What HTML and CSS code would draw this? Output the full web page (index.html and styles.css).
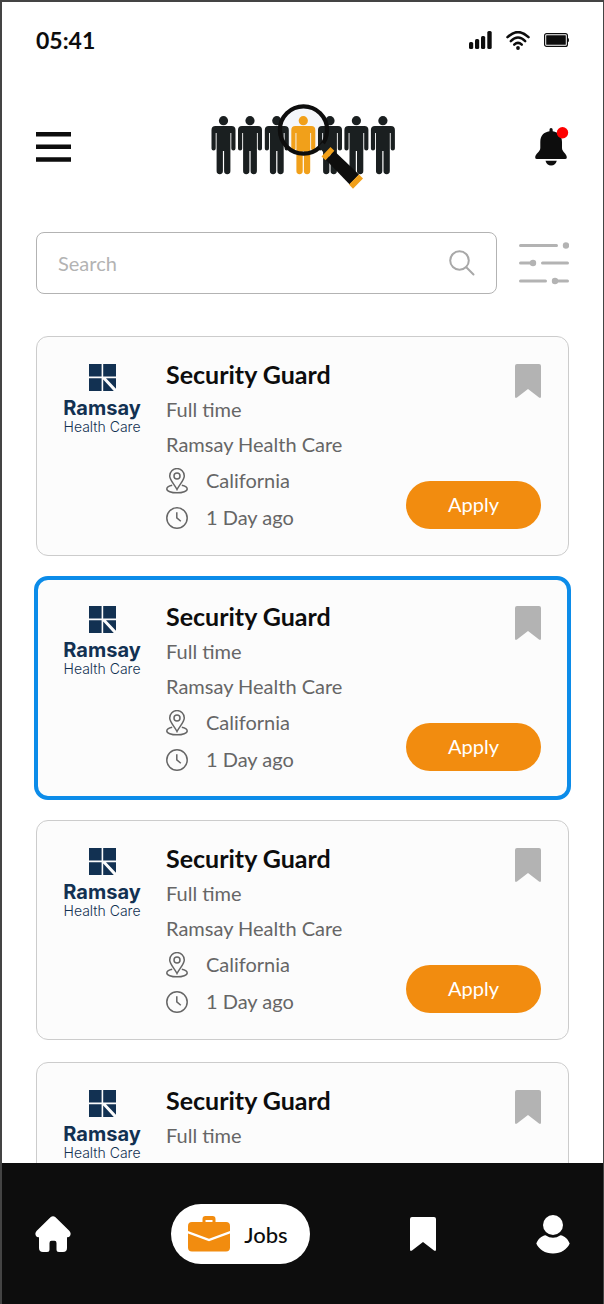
FILE: index.html
```html
<!DOCTYPE html>
<html lang="en">
<head>
  <meta charset="UTF-8">
  <meta name="viewport" content="width=device-width, initial-scale=1">
  <title>Jobs</title>
  <link rel="stylesheet" href="styles.css">
</head>
<body>
  <!-- shared icons -->
  <svg class="sprite" aria-hidden="true">
    <symbol id="person" viewBox="-13 0 26 72" overflow="visible">
      <circle cx="0" cy="16.7" r="4.6"/>
      <path d="M-8 22H8Q12 22 12 26V44.5a2 2 0 0 1-4.2 0V29H6.9V67a2.6 2.6 0 0 1-6.3 0V47H-.6V67a2.6 2.6 0 0 1-6.3 0V29H-7.8V44.5a2 2 0 0 1-4.2 0V26Q-12 22-8 22Z"/>
    </symbol>
    <symbol id="bookmark" viewBox="0 0 26 34">
      <path d="M2 0H24Q26 0 26 2V32.5Q26 34.600 24 33.600L13 25 2 33.600Q0 34.600 0 32.500V2Q0 0 2 0Z"/>
    </symbol>
    <symbol id="ramsay" viewBox="0 0 27 27">
      <path d="M0 0H12.600V12.600H0ZM14.200 0H27V12.600H14.200ZM0 14.200H12.600V27H0ZM17 14.200H27V24.700ZM14.200 15.500L24.800 27H14.200Z"/>
    </symbol>
    <symbol id="pin" viewBox="0 0 22 26">
      <path d="M11 21.500C8.500 16.500 3.700 11.800 3.700 7.900a7.300 7.300 0 0 1 14.600 0C18.300 11.800 13.500 16.500 11 21.500Z"/>
      <circle cx="11" cy="8" r="3"/>
      <path d="M6.200 17.300C2.800 18 .8 19.300.8 20.900c0 2.200 4.500 3.900 10.200 3.900s10.200-1.700 10.200-3.900c0-1.600-2-2.900-5.400-3.600"/>
    </symbol>
    <symbol id="clock" viewBox="0 0 22 22">
      <circle cx="11" cy="11" r="10.200"/>
      <path d="M10.800 5.300V10.800L14.800 14.200"/>
    </symbol>
  </svg>

  <div class="screen">
    <div class="status">
      <span class="time">05:41</span>
      <div class="status-icons">
        <svg width="23" height="18" viewBox="0 0 23 18" aria-hidden="true">
          <rect x="0" y="11" width="4.200" height="7" rx="1.500"/>
          <rect x="6" y="8" width="4.200" height="10" rx="1.500"/>
          <rect x="12" y="5" width="4.200" height="13" rx="1.500"/>
          <rect x="18.300" y="0" width="4.400" height="18" rx="1.500"/>
        </svg>
        <svg width="24" height="19" viewBox="0 0 24 19" aria-hidden="true">
          <g fill="none" stroke="#0d0d0d" stroke-width="2.500" stroke-linecap="round">
            <path d="M1.500 6.200Q12-4 22.500 6.200"/>
            <path d="M4.800 10.100Q12 2.900 19.200 10.100"/>
            <path d="M8.200 13.700Q12 9.900 15.800 13.700"/>
          </g>
          <circle cx="12" cy="17" r="1.900"/>
        </svg>
        <svg width="25" height="14" viewBox="0 0 25 14" aria-hidden="true">
          <rect x=".6" y=".6" width="22.800" height="12.800" rx="2" fill="none" stroke="#0d0d0d" stroke-width="1.200"/>
          <rect x="2.200" y="2.200" width="19.600" height="9.600" rx=".5"/>
          <path d="M23.500 4.500Q25 5 25 7T23.500 9.500Z"/>
        </svg>
      </div>
    </div>

    <header class="topbar">
      <button class="icon-btn" type="button" aria-label="Menu">
        <svg width="35" height="30" viewBox="0 0 35 30"><path d="M0 0H35V4.500H0ZM0 12.600H35V17.100H0ZM0 25.300H35V29.800H0Z"/></svg>
      </button>
      <svg class="logo" width="184" height="85" viewBox="0 0 184 85" aria-hidden="true">
        <circle cx="92.500" cy="26" r="23" fill="#f4f6fa"/>
        <g fill="#1a1f20">
          <use href="#person" x="-.5" width="26" height="72"/>
          <use href="#person" x="26" width="26" height="72"/>
          <use href="#person" x="52.800" width="26" height="72"/>
          <use href="#person" x="106" width="26" height="72"/>
          <use href="#person" x="132.400" width="26" height="72"/>
          <use href="#person" x="158.900" width="26" height="72"/>
        </g>
        <use href="#person" x="79.300" width="26" height="72" fill="#f1a01a"/>
        <circle cx="92.500" cy="26" r="23.600" fill="none" stroke="#0d0d0d" stroke-width="4.200"/>
        <path d="M107.500 42.500L111.500 38.500 121 46 115 51.500Z" fill="#1a1f20"/>
        <path d="M115 56L123.300 47 148 70.500 138.700 80.500Z" fill="#0d0d0d"/>
        <path d="M110.500 52.500L119.500 43 123.300 46.700 114.500 56.300ZM138 80.500L148 70.500 152 74.500 142 84.800Z" fill="#f1a01a"/>
      </svg>
      <button class="icon-btn" type="button" aria-label="Notifications">
        <svg width="34" height="39" viewBox="0 0 34 39">
          <path d="M16 1q1.700 0 1.700 1.800V4.300C23.500 5 27 9 27 15V21C27 25 31.800 26.500 31.800 30.500Q31.800 32 30 32H2Q.2 32 .2 30.500C.2 26.500 5.300 25 5.300 21V15C5.300 9 8.800 5 14.500 4.300V2.800Q14.500 1 16 1ZM10.500 33.800H21.800Q20.500 38.500 16.100 38.500T10.500 33.800Z"/>
          <circle cx="27.500" cy="5.700" r="5.700" fill="#fe0000"/>
        </svg>
      </button>
    </header>

    <form class="search-row">
      <label class="search">
        <input type="search" placeholder="Search" aria-label="Search">
        <svg width="26" height="26" viewBox="0 0 26 26" aria-hidden="true">
          <circle cx="10.500" cy="10.500" r="9.300"/>
          <path d="M17.300 17.300L24.500 24.500"/>
        </svg>
      </label>
      <button class="icon-btn" type="button" aria-label="Filters">
        <svg class="filter" width="50" height="44" viewBox="0 0 50 44">
          <path d="M1.500 4.500H37.500M1.500 22H12M23.500 22H48.500M1.500 40H26.500M37 40H48.500"/>
          <circle cx="47" cy="4.500" r="3.200"/>
          <circle cx="14" cy="22" r="3.200"/>
          <circle cx="36" cy="40" r="3.200"/>
        </svg>
      </button>
    </form>

    <main class="jobs">
      <article class="card">
        <div class="brand">
          <svg width="27" height="27" aria-hidden="true"><use href="#ramsay"/></svg>
          <strong>Ramsay</strong>
          <span>Health Care</span>
        </div>
        <div class="info">
          <h2>Security Guard</h2>
          <p>Full time</p>
          <p>Ramsay Health Care</p>
          <div class="meta"><svg width="22" height="26" aria-hidden="true"><use href="#pin"/></svg>California</div>
          <div class="meta"><svg width="22" height="22" aria-hidden="true"><use href="#clock"/></svg>1 Day ago</div>
        </div>
        <div class="actions">
          <button class="icon-btn save" type="button" aria-label="Save job"><svg width="26" height="34"><use href="#bookmark"/></svg></button>
          <button class="apply" type="button">Apply</button>
        </div>
      </article>

      <article class="card selected">
        <div class="brand">
          <svg width="27" height="27" aria-hidden="true"><use href="#ramsay"/></svg>
          <strong>Ramsay</strong>
          <span>Health Care</span>
        </div>
        <div class="info">
          <h2>Security Guard</h2>
          <p>Full time</p>
          <p>Ramsay Health Care</p>
          <div class="meta"><svg width="22" height="26" aria-hidden="true"><use href="#pin"/></svg>California</div>
          <div class="meta"><svg width="22" height="22" aria-hidden="true"><use href="#clock"/></svg>1 Day ago</div>
        </div>
        <div class="actions">
          <button class="icon-btn save" type="button" aria-label="Save job"><svg width="26" height="34"><use href="#bookmark"/></svg></button>
          <button class="apply" type="button">Apply</button>
        </div>
      </article>

      <article class="card">
        <div class="brand">
          <svg width="27" height="27" aria-hidden="true"><use href="#ramsay"/></svg>
          <strong>Ramsay</strong>
          <span>Health Care</span>
        </div>
        <div class="info">
          <h2>Security Guard</h2>
          <p>Full time</p>
          <p>Ramsay Health Care</p>
          <div class="meta"><svg width="22" height="26" aria-hidden="true"><use href="#pin"/></svg>California</div>
          <div class="meta"><svg width="22" height="22" aria-hidden="true"><use href="#clock"/></svg>1 Day ago</div>
        </div>
        <div class="actions">
          <button class="icon-btn save" type="button" aria-label="Save job"><svg width="26" height="34"><use href="#bookmark"/></svg></button>
          <button class="apply" type="button">Apply</button>
        </div>
      </article>

      <article class="card">
        <div class="brand">
          <svg width="27" height="27" aria-hidden="true"><use href="#ramsay"/></svg>
          <strong>Ramsay</strong>
          <span>Health Care</span>
        </div>
        <div class="info">
          <h2>Security Guard</h2>
          <p>Full time</p>
          <p>Ramsay Health Care</p>
          <div class="meta"><svg width="22" height="26" aria-hidden="true"><use href="#pin"/></svg>California</div>
          <div class="meta"><svg width="22" height="22" aria-hidden="true"><use href="#clock"/></svg>1 Day ago</div>
        </div>
        <div class="actions">
          <button class="icon-btn save" type="button" aria-label="Save job"><svg width="26" height="34"><use href="#bookmark"/></svg></button>
          <button class="apply" type="button">Apply</button>
        </div>
      </article>
    </main>

    <nav class="tabs">
      <a href="#home" aria-label="Home">
        <svg width="36" height="36" viewBox="0 0 36 36"><path d="M15.500 1.200Q18-.9 20.500 1.200L34.500 15Q36.500 17.500 35 20 34 21.500 32 21.300V32Q32 36 28 36H24Q21.500 36 21.500 33.500V27Q21.500 24.800 19.500 24.800H16.500Q14.500 24.800 14.500 27V33.500Q14.500 36 12 36H8Q4 36 4 32V21.300Q2 21.500 1 20-.5 17.500 1.500 15Z"/></svg>
      </a>
      <a class="active" href="#jobs">
        <svg width="42" height="36" viewBox="0 0 42 36" aria-hidden="true">
          <path fill-rule="evenodd" d="M14.500 6V3Q14.500 0 17.500 0H24.500Q27.500 0 27.500 3V6H38Q42 6 42 10V15L21 22.700 0 15V10Q0 6 4 6ZM17.500 6H24.500V4H17.500Z"/>
          <path d="M0 17.500L21 25.200 42 17.500V31.500Q42 35.500 38 35.500H4Q0 35.500 0 31.500Z"/>
        </svg>
        Jobs
      </a>
      <a href="#saved" aria-label="Saved"><svg width="26" height="34"><use href="#bookmark"/></svg></a>
      <a href="#profile" aria-label="Profile">
        <svg width="34" height="39" viewBox="0 0 34 39">
          <circle cx="17" cy="10" r="10"/>
          <path d="M9.500 20.200Q17 25.300 24.500 20.200C28.500 20.700 32 24 33.700 28.500 31 34.500 25 38.500 17 38.500S3 34.500.3 28.500C2 24 5.500 20.700 9.500 20.200Z"/>
        </svg>
      </a>
    </nav>
  </div>
</body>
</html>
```
FILE: styles.css
```css
* {
  box-sizing: border-box;
}
body {
  margin: 0;
  font-family: Lato, "Liberation Sans", sans-serif;
  font-size: 20px;
  color: #0d0d0d;
  background: #fff;
}
svg {
  display: block;
  flex: none;
}
.sprite {
  position: absolute;
  width: 0;
  height: 0;
}
button {
  font: inherit;
  border: none;
  cursor: pointer;
}
.icon-btn {
  padding: 0;
  background: none;
}
.screen {
  height: 100vh;
  display: flex;
  flex-direction: column;
  border: 2px solid #444;
  border-width: 2px 1px 0 2px;
}

/* status bar and header */
.status {
  display: flex;
  justify-content: space-between;
  align-items: center;
  padding: 24px 34px 0;
  line-height: 28px;
}
.time {
  font-size: 23px;
  font-weight: 700;
}
.status-icons {
  display: flex;
  align-items: center;
  gap: 14px;
  fill: #0d0d0d;
}
.topbar {
  display: flex;
  justify-content: space-between;
  align-items: center;
  padding: 50px 34px 0;
  fill: #0d0d0d;
}

/* search */
.search-row {
  display: flex;
  align-items: center;
  gap: 22px;
  padding: 43px 34px 42px;
}
.search {
  flex: 1;
  display: flex;
  align-items: center;
  height: 62px;
  padding: 0 21px;
  border: 1px solid #b3b3b3;
  border-radius: 8px;
}
.search input {
  flex: 1;
  min-width: 0;
  padding: 0;
  border: none;
  outline: none;
  background: none;
  font: inherit;
  color: #0d0d0d;
}
.search input::placeholder {
  color: #b3b3b3;
}
.search svg {
  fill: none;
  stroke: #a8a8a8;
  stroke-width: 2;
  stroke-linecap: round;
}
.filter {
  fill: #b3b3b3;
  stroke: #b3b3b3;
  stroke-width: 3;
  stroke-linecap: round;
}
.filter circle {
  stroke: none;
}

/* job list */
.jobs {
  flex: 1;
  min-height: 0;
  overflow-y: auto;
  scrollbar-width: none;
  display: flex;
  flex-direction: column;
  gap: 22px;
  padding: 0 34px;
}
.card {
  flex: none;
  display: flex;
  padding: 19px 27px;
  border: 1px solid #ccc;
  border-radius: 12px;
  background: #fcfcfc;
}
.card.selected {
  outline: 4px solid #0c8ce9;
  outline-offset: -2px;
}
.brand {
  width: 76px;
  padding-top: 8px;
  display: flex;
  flex-direction: column;
  align-items: center;
  font-family: Inter, "Liberation Sans", sans-serif;
  color: #123152;
  fill: #123152;
}
.brand strong {
  margin-top: 5px;
  font-size: 20px;
  font-weight: 700;
  line-height: 24px;
}
.brand span {
  font-size: 14px;
  font-weight: 300;
  line-height: 14px;
  white-space: nowrap;
}
.info {
  flex: 1;
  margin-left: 26px;
  color: #666;
}
.info h2 {
  margin: 0;
  font-size: 25px;
  font-weight: 700;
  line-height: 36px;
  color: #0d0d0d;
}
.info p {
  margin: 0;
  line-height: 35px;
}
.meta {
  display: flex;
  align-items: center;
  gap: 18px;
  line-height: 37px;
}
.meta svg {
  fill: none;
  stroke: #666;
  stroke-width: 1.5;
}
.actions {
  display: flex;
  flex-direction: column;
  justify-content: space-between;
  align-items: flex-end;
  padding: 8px 0 7px;
}
.save {
  fill: #b3b3b3;
}
.apply {
  height: 48px;
  padding: 0 42px 2px;
  border-radius: 24px;
  background: #f28c0f;
  color: #fff;
}

/* bottom tabs */
.tabs {
  display: flex;
  justify-content: space-between;
  align-items: center;
  padding: 41px 33px 40px;
  background: #0d0d0d;
  fill: #fff;
}
.tabs .active {
  display: flex;
  align-items: center;
  gap: 14px;
  height: 60px;
  padding: 0 22px 0 17px;
  border-radius: 30px;
  background: #fff;
  color: #0d0d0d;
  fill: #f28c0f;
  font-size: 22px;
  font-weight: 500;
  text-decoration: none;
}
```
